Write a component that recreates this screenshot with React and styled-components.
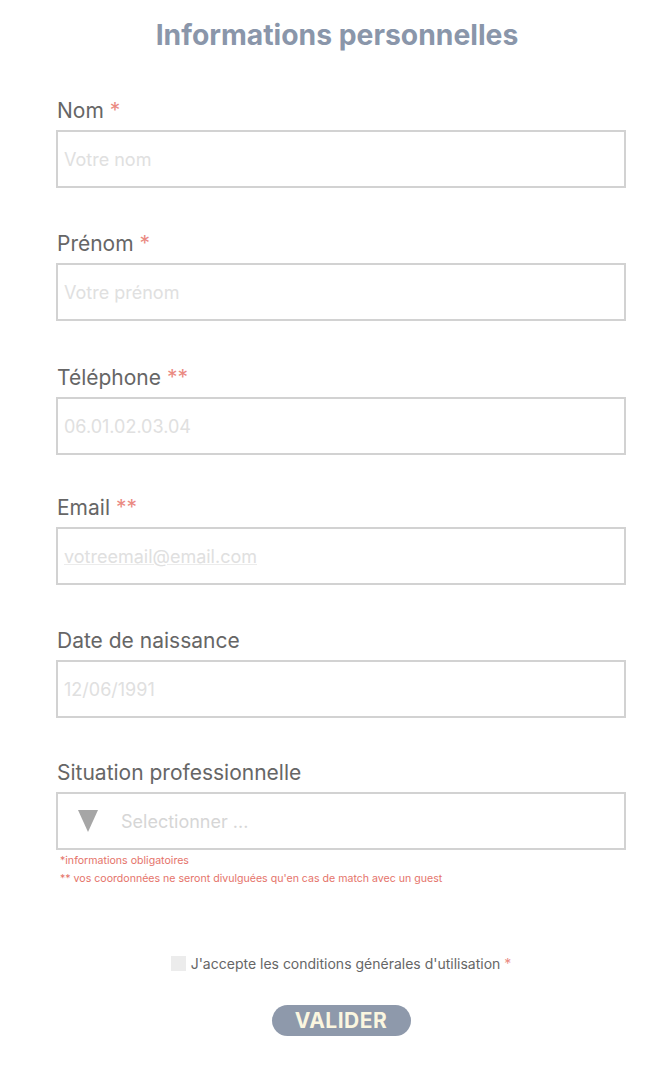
import React from 'react'
import styled, { createGlobalStyle } from 'styled-components';

const GlobalStyle = createGlobalStyle`
  body {
    margin: 0;
    background: #fff;
    font-family: Inter, "Noto Sans", sans-serif;
  }
`;

const Container = styled.div`
  padding: 18px 44px 0 56px;
  display: flex;
  flex-direction: column;
`;
const Title = styled.h1`
  margin: 0 0 45px -8px;
  font-size: 28.3px;
  line-height: 34px;
  font-weight: 700;
  color: #8a96aa;
  text-align: center;
`;
const Field = styled.div`
  display: flex;
  flex-direction: column;
  gap: 5px;
  margin-top: ${p => p.$top || 0}px;
`;
const Label = styled.label`
  font-size: 21px;
  line-height: 28px;
  color: #666;
  padding-left: 1px;
`;
const Star = styled.span`
  color: #ea8a82;
`;
const Input = styled.input`
  box-sizing: border-box;
  height: 58px;
  width: 100%;
  border: 2px solid #d2d2d2;
  padding: 0 0 0 6px;
  font-family: inherit;
  font-size: 18px;
  outline: none;
  &::placeholder {
    color: #e0e0e0;
    text-decoration: ${p => (p.$link ? 'underline' : 'none')};
    text-decoration-color: #ececec;
  }
`;
const Select = styled.div`
  box-sizing: border-box;
  height: 58px;
  border: 2px solid #d2d2d2;
  display: flex;
  align-items: center;
  padding-left: 20px;
  gap: 23px;
  font-size: 18px;
  color: #d6d6d6;
`;
const Arrow = styled.span`
  width: 0;
  height: 0;
  border-left: 10px solid transparent;
  border-right: 10px solid transparent;
  border-top: 22px solid #a6a6a6;
`;
const Notes = styled.div`
  margin-top: 2px;
  padding-left: 4px;
  font-size: 10.6px;
  line-height: 18px;
  color: #e5736a;
`;
const Terms = styled.div`
  margin-top: 67px;
  display: flex;
  align-items: center;
  justify-content: center;
  gap: 5px;
  font-size: 14px;
  color: #666;
`;
const Box = styled.span`
  width: 15px;
  height: 15px;
  background: #ececec;
`;
const Button = styled.button`
  align-self: center;
  margin: 33px 0 0;
  width: 139px;
  height: 31px;
  border: none;
  border-radius: 16px;
  background: #8e99ab;
  color: #fbf6df;
  font-family: inherit;
  font-weight: 700;
  font-size: 21px;
  letter-spacing: 0.5px;
`;

const fields = [
  { label: 'Nom', star: '*', ph: 'Votre nom', top: 0 },
  { label: 'Prénom', star: '*', ph: 'Votre prénom', top: 42 },
  { label: 'Téléphone', star: '**', ph: '06.01.02.03.04', top: 43 },
  { label: 'Email', star: '**', ph: 'votreemail@email.com', top: 39, link: true },
  { label: 'Date de naissance', star: '', ph: '12/06/1991', top: 42 },
];

export default function App() {
  return (
    <Container>
      <GlobalStyle />
      <Title>Informations personnelles</Title>
      {fields.map(f => (
        <Field key={f.label} $top={f.top}>
          <Label>
            {f.label}
            {f.star && <Star> {f.star}</Star>}
          </Label>
          <Input placeholder={f.ph} $link={f.link} />
        </Field>
      ))}
      <Field $top={41}>
        <Label>Situation professionnelle</Label>
        <Select>
          <Arrow />
          Selectionner ...
        </Select>
      </Field>
      <Notes>
        <div>*informations obligatoires</div>
        <div>** vos coordonnées ne seront divulguées qu'en cas de match avec un guest</div>
      </Notes>
      <Terms>
        <Box />
        <span>
          J'accepte les conditions générales d'utilisation <Star>*</Star>
        </span>
      </Terms>
      <Button>VALIDER</Button>
    </Container>
  );
}
